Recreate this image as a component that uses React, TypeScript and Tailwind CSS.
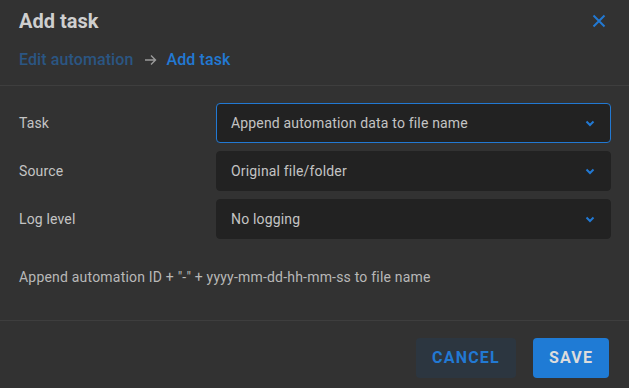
import React from 'react';

const ROBOTO = { fontFamily: 'Roboto, "Liberation Sans", sans-serif' };

const Chevron = () => (
  <svg width="10" height="7" viewBox="0 0 10 7" className="shrink-0">
    <path d="M1.5 1.5 L5 5 L8.5 1.5" stroke="#2279d3" strokeWidth="2" fill="none" />
  </svg>
);

const SelectRow = ({ label, value, focused }: { label: string; value: string; focused?: boolean }) => (
  <div className="flex items-center">
    <div className="w-[197px] text-[14px] tracking-[0.15px] text-[#c4c4c4]">{label}</div>
    <div
      className={`flex-1 h-[40px] rounded-[4px] bg-[#222222] flex items-center justify-between pl-[14px] pr-[15px] border ${
        focused ? 'border-[#2279d3]' : 'border-[#222222]'
      }`}
    >
      <span className="text-[14px] tracking-[0.17px] text-[#c4c4c4]">{value}</span>
      <Chevron />
    </div>
  </div>
);

export default function App() {
  return (
    <div className="w-[629px] h-[388px] bg-[#323232] flex flex-col" style={ROBOTO}>
      {/* Header */}
      <div className="h-[85px] px-[19px] pt-[7px] relative">
        <h1 className="text-[20px] font-bold text-[#cfcfcf] leading-[28px]">Add task</h1>
        <div className="mt-[15px] flex items-center gap-[10px] text-[16px] font-medium tracking-[0.1px] leading-[20px]">
          <span className="text-[#2b5683]">Edit automation</span>
          <svg width="13" height="12" viewBox="0 0 13 12">
            <path d="M1 6 H11.5 M7 1.5 L11.5 6 L7 10.5" stroke="#9a9a9a" strokeWidth="1.4" fill="none" />
          </svg>
          <span className="text-[#2279d3]">Add task</span>
        </div>
        <button className="absolute right-[23px] top-[14px]">
          <svg width="14" height="14" viewBox="0 0 14 14">
            <path d="M1.5 1.5 L12.5 12.5 M12.5 1.5 L1.5 12.5" stroke="#2279d3" strokeWidth="2" />
          </svg>
        </button>
      </div>
      <div className="h-px bg-[#3e3e3e]" />

      {/* Body */}
      <div className="flex-1 px-[19px] pt-[17px] pr-[18px] flex flex-col gap-[8px]">
        <SelectRow label="Task" value="Append automation data to file name" focused />
        <SelectRow label="Source" value="Original file/folder" />
        <SelectRow label="Log level" value="No logging" />
        <p className="mt-[20px] text-[14px] tracking-[0.2px] text-[#b8b8b8]">
          Append automation ID + "-" + yyyy-mm-dd-hh-mm-ss to file name
        </p>
      </div>
      <div className="h-px bg-[#3e3e3e]" />

      {/* Footer */}
      <div className="h-[67px] flex items-center justify-end gap-[17px] pr-[20px] pt-[6px]">
        <button className="h-[40px] w-[100px] rounded-[4px] bg-[#2c3640] text-[#2279d3] text-[16px] font-bold tracking-[1.2px]">
          CANCEL
        </button>
        <button className="h-[40px] w-[76px] rounded-[4px] bg-[#1f7bd5] text-[#dcdcdc] text-[16px] font-bold tracking-[1.2px]">
          SAVE
        </button>
      </div>
    </div>
  );
}
